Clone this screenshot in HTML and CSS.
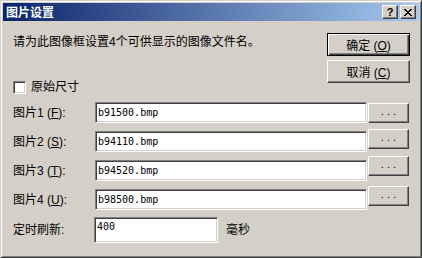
FILE: index.html
```html
<!DOCTYPE html>
<html lang="zh-CN">
<head>
  <meta charset="UTF-8" />
  <title>图片设置</title>
  <link rel="stylesheet" href="styles.css">
</head>
<body>

  <div class="window">
    <div class="titlebar">
      <span class="title">图片设置</span>
      <div class="tb-btns">
        <span class="tb-btn help">?</span>
        <span class="tb-btn">
          <svg width="8" height="7" viewBox="0 0 8 7"><path d="M0 0h2v1h-2zM6 0h2v1h-2zM1 1h2v1h-2zM5 1h2v1h-2zM2 2h4v1h-4zM3 3h2v1h-2zM2 4h4v1h-4zM1 5h2v1h-2zM5 5h2v1h-2zM0 6h2v1h-2zM6 6h2v1h-2z" fill="#000"/></svg>
        </span>
      </div>
    </div>

    <div class="client">
      <div class="top">
        <div class="intro-col">
          <p class="intro">请为此图像框设置4个可供显示的图像文件名。</p>
          <label class="check"><span class="box"></span>原始尺寸</label>
        </div>
        <div class="actions">
          <button class="btn default">确定 (<u>O</u>)</button>
          <button class="btn">取消 (<u>C</u>)</button>
        </div>
      </div>

      <div class="rows">
        <span class="lbl">图片1 (<u>F</u>):</span>
        <div class="field">b91500.bmp</div>
        <button class="browse">. . .</button>

        <span class="lbl">图片2 (<u>S</u>):</span>
        <div class="field">b94110.bmp</div>
        <button class="browse up3">. . .</button>

        <span class="lbl">图片3 (<u>T</u>):</span>
        <div class="field">b94520.bmp</div>
        <button class="browse up5">. . .</button>

        <span class="lbl">图片4 (<u>U</u>):</span>
        <div class="field">b98500.bmp</div>
        <button class="browse up4">. . .</button>
      </div>

      <div class="timer">
        <span class="lbl">定时刷新:</span>
        <div class="field tall">400</div>
        <span class="unit">毫秒</span>
      </div>
    </div>
  </div>

</body>
</html>
```

FILE: styles.css
```css
body {
  margin: 0;
  font-family: "Liberation Sans", "Noto Sans CJK SC", sans-serif;
  font-size: 12px;
  color: #000;
  background: #d4d0c8;
}

.window {
  width: 422px;
  height: 258px;
  box-sizing: border-box;
  padding: 1px;
  background: #d4d0c8;
  border: 1px solid;
  border-color: #d4d0c8 #404040 #404040 #d4d0c8;
  box-shadow: inset 1px 1px #fff, inset -1px -1px #808080;
  display: flex;
  flex-direction: column;
}

.titlebar {
  height: 18px;
  margin: 1px 1px 0;
  background: linear-gradient(90deg, #0a246a, #a6caf0);
  display: flex;
  align-items: center;
  justify-content: space-between;
  padding: 0 3px 0 3px;
}

.title {
  color: #fff;
  font-weight: bold;
  font-family: "Noto Sans CJK SC", sans-serif;
  font-size: 12px;
  line-height: 14px;
}

.tb-btns {
  display: flex;
  gap: 2px;
}

.tb-btn {
  width: 14px;
  height: 12px;
  background: #d4d0c8;
  border: 1px solid;
  border-color: #fff #404040 #404040 #fff;
  box-shadow: inset -1px -1px #808080;
  display: flex;
  align-items: center;
  justify-content: center;
}

.help {
  font-weight: bold;
  font-size: 11px;
  line-height: 12px;
}

.client {
  flex: 1;
  padding: 12px 10px 0 11px;
}

.top {
  display: flex;
  justify-content: space-between;
}

.intro {
  margin: 2px 0 0;
  line-height: 14px;
}

.check {
  display: flex;
  align-items: center;
  gap: 5px;
  margin-top: 31px;
  line-height: 14px;
}

.box {
  width: 11px;
  height: 11px;
  background: #fff;
  border: 1px solid;
  border-color: #808080 #fff #fff #808080;
  box-shadow: inset 1px 1px #404040, inset -1px -1px #d4d0c8;
}

.actions {
  display: flex;
  flex-direction: column;
  gap: 4px;
}

.btn {
  width: 83px;
  height: 23px;
  margin: 0;
  padding: 0;
  font: inherit;
  background: #d4d0c8;
  border: 1px solid;
  border-color: #fff #404040 #404040 #fff;
  box-shadow: inset -1px -1px #808080;
}

.btn.default {
  border-color: #000;
  box-shadow: inset 1px 1px #fff, inset -1px -1px #404040, inset -2px -2px #808080;
}

.rows {
  display: grid;
  grid-template-columns: 81px 272px 41px;
  grid-auto-rows: 21px;
  column-gap: 1px;
  row-gap: 8px;
  align-items: center;
  margin-top: 8px;
}

.lbl {
  line-height: 14px;
}

.field {
  height: 21px;
  box-sizing: border-box;
  padding: 3px 2px 0;
  background: #fff;
  border: 1px solid;
  border-color: #808080 #fff #fff #808080;
  box-shadow: inset 1px 1px #404040, inset -1px -1px #d4d0c8;
  font-family: "DejaVu Sans Mono", monospace;
  font-size: 10px;
  line-height: 14px;
}

.field.tall {
  width: 124px;
  height: 26px;
  padding-top: 2px;
}

.browse {
  height: 20px;
  margin: 0;
  padding: 0 0 4px;
  font: inherit;
  font-size: 11px;
  background: #d4d0c8;
  border: 1px solid;
  border-color: #fff #404040 #404040 #fff;
  box-shadow: inset -1px -1px #808080;
}

.up3 { margin-top: -6px; }
.up5 { margin-top: -9px; }
.up4 { margin-top: -8px; }

.timer {
  display: grid;
  grid-template-columns: 81px 124px auto;
  align-items: center;
  margin-top: 7px;
}

.unit {
  margin-left: 8px;
  line-height: 14px;
}
```
